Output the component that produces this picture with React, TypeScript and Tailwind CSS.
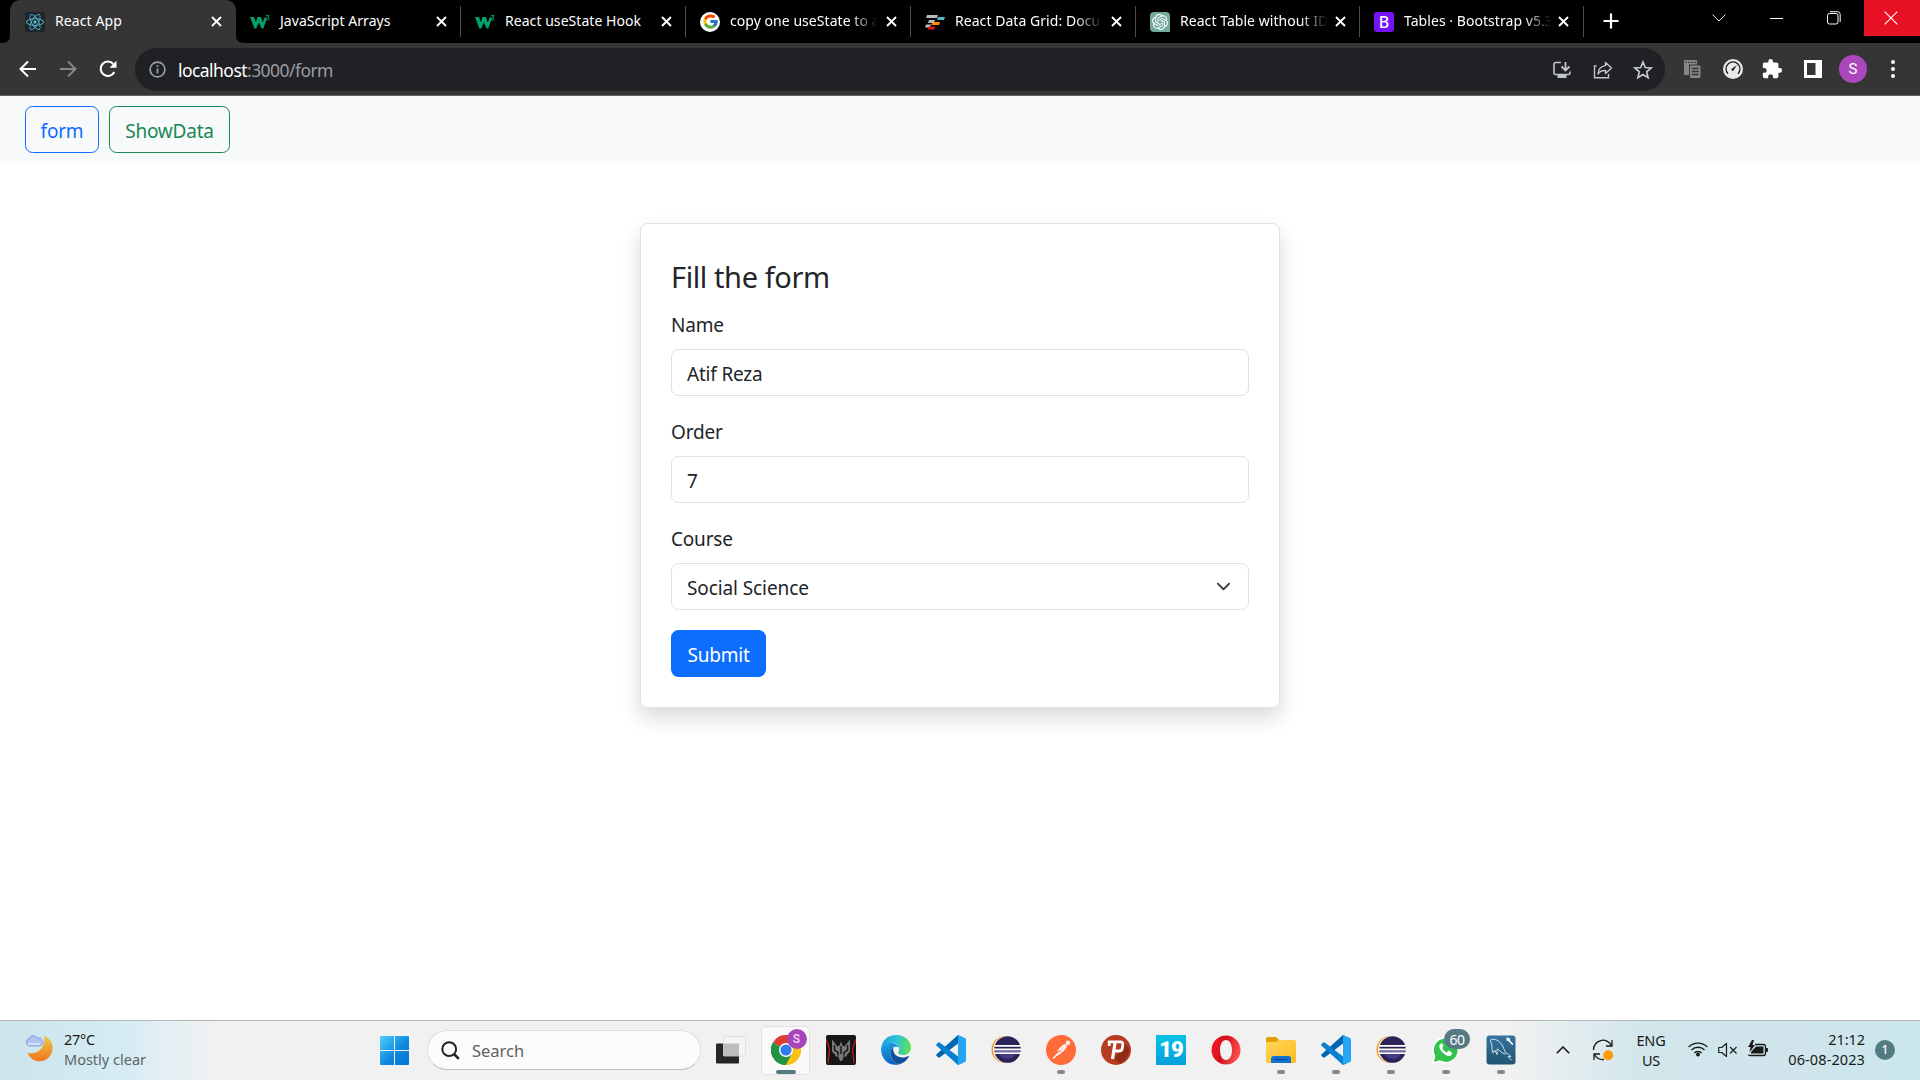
import type { ReactNode } from "react";
import { SiOpenai, SiPostman, SiReact } from "react-icons/si";
import { FcGoogle } from "react-icons/fc";
import { MdExtension } from "react-icons/md";

const font = "font-['Noto_Sans','Open_Sans',sans-serif]";

/* ---------- favicons ---------- */

const ReactIcon = () => (
  <div className="flex size-5 items-center justify-center rounded-[2px] bg-[#20232a]">
    <SiReact className="size-[18px] text-[#53b9d3]" />
  </div>
);

const W3Icon = () => (
  <svg viewBox="0 0 20 20" className="size-5">
    <path d="M0 5h4l2 5.600L7.400 5h3.400l2 5.600L14.600 5.400h2.600L13.400 16.400h-1.800L8.900 10.600 6.200 16.400H4.400z" fill="#04a06c" />
    <path d="M16 3.600h3l-1.400 1.800q1.600.3 1.400 1.600-.3 1.400-2.600 1" fill="none" stroke="#04a06c" strokeWidth="1" />
  </svg>
);

const GoogleIcon = () => (
  <div className="flex size-5 items-center justify-center rounded-full bg-white">
    <FcGoogle className="size-[17px]" />
  </div>
);

const GridIcon = () => (
  <svg viewBox="0 0 20 20" className="size-5">
    <path d="M2 3h11l-1 3H1z" fill="#b4bbbf" />
    <path d="M13 5h7l-1 3h-7z" fill="#55b4c8" />
    <path d="M4 8h6l-1 3H3z" fill="#b4bbbf" />
    <path d="M8 10h7l-1 3H6z" fill="#ff8c00" />
    <path d="M1 12.500h5l-1 3H0z" fill="#b4bbbf" />
    <path d="M4 14.500h6l-1 3H3z" fill="#f01010" />
  </svg>
);

const GptIcon = () => (
  <div className="flex size-5 items-center justify-center rounded-[4px] rounded-br-none bg-[#74aa9c]">
    <SiOpenai className="size-4 text-white" />
  </div>
);

const BootstrapIcon = () => (
  <div className="flex size-5 items-center justify-center rounded-[3px] bg-[#7414f5]">
    <span className="text-[16px] font-medium leading-none text-white">B</span>
  </div>
);

/* ---------- browser chrome ---------- */

const CloseX = () => (
  <svg viewBox="0 0 11 11" className="size-[11px] shrink-0">
    <path d="M1 1l9 9M10 1L1 10" stroke="#fff" strokeWidth="1.900" />
  </svg>
);

type TabData = { title: string; icon: ReactNode; fade?: boolean; width: string; gap: string };

const tabs: TabData[] = [
  { title: "JavaScript Arrays", icon: <W3Icon />, width: "w-[225px]", gap: "ml-[9px]" },
  { title: "React useState Hook", icon: <W3Icon />, width: "w-[225px]", gap: "ml-[9px]" },
  { title: "copy one useState to a", icon: <GoogleIcon />, fade: true, width: "w-[225px]", gap: "ml-[9px]" },
  { title: "React Data Grid: Docu", icon: <GridIcon />, fade: true, width: "w-[225px]", gap: "ml-[9px]" },
  { title: "React Table without ID", icon: <GptIcon />, fade: true, width: "w-[224px]", gap: "ml-[8px]" },
  { title: "Tables · Bootstrap v5.3", icon: <BootstrapIcon />, fade: true, width: "w-[224px]", gap: "ml-[7px]" },
];

const Tab = ({ title, icon, fade, width, gap }: TabData) => (
  <div className={`flex h-[31px] shrink-0 items-center border-r border-[#4a4d51] pl-[14px] ${width}`}>
    {icon}
    <span
      className={`ml-[10px] w-[147px] whitespace-nowrap pb-[2px] text-[14px] leading-5 tracking-[0.050px] text-white ${
        fade ? "[mask-image:linear-gradient(to_right,black_120px,transparent_148px)]" : ""
      }`}
    >
      {title}
    </span>
    <span className={`flex ${gap}`}>
      <CloseX />
    </span>
  </div>
);

const TabStrip = () => (
  <div className="flex h-[43px] bg-black pl-[2px]">
    <svg viewBox="0 0 8 43" className="h-[43px] w-2 shrink-0">
      <path d="M0 43q8 0 8-8v8z" fill="#353535" />
    </svg>
    <div className="flex h-[43px] w-[226px] shrink-0 items-center rounded-t-[10px] bg-[#353535] pl-[15px]">
      <ReactIcon />
      <span className="ml-[10px] w-[156px] pb-[2px] text-[14px] leading-5 tracking-[0.100px] text-white">React App</span>
      <CloseX />
    </div>
    <svg viewBox="0 0 8 43" className="-mr-2 h-[43px] w-2 shrink-0">
      <path d="M8 43q-8 0-8-8v8z" fill="#353535" />
    </svg>
    <div className="flex pt-1.5">
      {tabs.map((t) => (
        <Tab key={t.title} {...t} />
      ))}
    </div>
    <svg viewBox="0 0 16 16" className="ml-[19px] mt-[13px] size-4 shrink-0">
      <path d="M8 0.500v15M0.500 8h15" stroke="#fff" strokeWidth="2.200" />
    </svg>
    <div className="ml-auto flex h-9">
      <div className="flex w-[57px] items-center justify-center pr-[3px]">
        <svg viewBox="0 0 14 8" className="h-2 w-[14px]">
          <path d="M.5.5L7 7 13.500.5" fill="none" stroke="#ddd" strokeWidth="1" />
        </svg>
      </div>
      <div className="flex w-[57px] items-center justify-center pr-[3px]">
        <div className="h-px w-[13px] bg-white" />
      </div>
      <div className="flex w-[58px] items-center justify-center pr-[3px]">
        <svg viewBox="0 0 14 14" className="size-[14px]">
          <rect x=".5" y="2.500" width="10.500" height="10.500" rx="2" fill="none" stroke="#fff" />
          <path d="M3 .7h7.500q2.700 0 2.700 2.700V11" fill="none" stroke="#fff" />
        </svg>
      </div>
      <div className="flex w-14 items-center justify-center bg-[#e81123] pr-[2px]">
        <svg viewBox="0 0 14 14" className="size-[14px]">
          <path d="M.7.7l12.600 12.600M13.300.7L.7 13.300" stroke="#fff" strokeWidth="1.100" />
        </svg>
      </div>
    </div>
  </div>
);

const Toolbar = () => (
  <div className="flex h-[53px] items-center border-b border-[#606164] bg-[#353535] pb-px">
    <svg viewBox="0 0 18 18" className="ml-[19px] size-[18px] shrink-0">
      <path d="M17 9H2M9 1.500L1.500 9 9 16.500" fill="none" stroke="#fff" strokeWidth="2" />
    </svg>
    <svg viewBox="0 0 18 18" className="ml-[22px] size-[18px] shrink-0">
      <path d="M1 9h15M9 1.500L16.500 9 9 16.500" fill="none" stroke="#85868a" strokeWidth="2" />
    </svg>
    <svg viewBox="0 0 18 18" className="ml-[22px] size-[18px] shrink-0">
      <path d="M15.300 12A7.200 7.200 0 1 1 14.300 4" fill="none" stroke="#fff" strokeWidth="2.100" />
      <path d="M17.500 .8v7h-7z" fill="#fff" />
    </svg>
    <div className="ml-[18px] mt-px flex h-[43px] w-[1530px] shrink-0 items-center rounded-full bg-[#202124] pl-[14px]">
      <svg viewBox="0 0 17 17" className="size-[17px] shrink-0">
        <circle cx="8.500" cy="8.500" r="7.400" fill="none" stroke="#9aa0a6" strokeWidth="1.700" />
        <path d="M8.500 7.500v5M8.500 4.300v1.800" stroke="#9aa0a6" strokeWidth="1.800" />
      </svg>
      <span className="ml-3 pt-px text-[17.500px] leading-6 tracking-[-0.550px] text-[#9a9da1]">
        <span className="text-white">localhost</span>:3000/form
      </span>
      <svg viewBox="0 0 18 18" className="ml-auto mt-px size-[18px] shrink-0">
        <path d="M8 1.500H2.500q-1.500 0-1.500 1.500v9q0 1.500 1.500 1.500h13q1.500 0 1.500-1.500v-1.500" fill="none" stroke="#c4c7c9" strokeWidth="1.600" />
        <path d="M4.500 14h9v3h-9z" fill="#c4c7c9" />
        <path d="M12.500 1v8M8.500 5.500l4 4 4-4" fill="none" stroke="#c4c7c9" strokeWidth="1.800" />
      </svg>
      <svg viewBox="0 0 20 18" className="ml-[22px] mt-px h-[18px] w-5 shrink-0">
        <path d="M3.500 5H1.500v11.700h14V13" fill="none" stroke="#c4c7c9" strokeWidth="1.400" />
        <path d="M12.500 1.500L18.500 7l-6 5.500V9.500Q7.500 9.200 5 13 5.500 5.500 12.500 4.600z" fill="none" stroke="#c4c7c9" strokeWidth="1.400" strokeLinejoin="round" />
      </svg>
      <svg viewBox="0 0 20 20" className="ml-5 mr-3 mt-[2px] size-5 shrink-0">
        <path d="M10 2l2.300 5.500 5.900.5-4.500 3.900 1.400 5.800L10 14.600l-5.100 3.100 1.400-5.800L1.800 8l5.900-.5z" fill="none" stroke="#c4c7c9" strokeWidth="1.700" />
      </svg>
    </div>
    <svg viewBox="0 0 18 20" className="ml-[18px] h-5 w-[18px] shrink-0">
      <path d="M1 2q0-1 1-1h11q1 0 1 1v3.500H6V16H2q-1 0-1-1z" fill="#85868a" />
      <path d="M2 3.300h11" stroke="#353535" strokeWidth="1" strokeDasharray="2 1" />
      <rect x="7" y="6.500" width="10.500" height="12.500" rx="1" fill="#85868a" />
      <path d="M8.700 9.500h7M8.700 12.500h7M8.700 15.500h7" stroke="#353535" strokeWidth="1.300" />
    </svg>
    <svg viewBox="0 0 20 20" className="ml-[22px] size-5 shrink-0">
      <circle cx="10" cy="10" r="10" fill="#e9eae8" />
      <path d="M5 14.800a7 7 0 1 1 10 0" fill="none" stroke="#222" strokeWidth="1.300" />
      <path d="M14 6l-3.200 5a1.200 1.200 0 1 1-1.600-1.400z" fill="#222" />
    </svg>
    <MdExtension className="ml-[18px] size-[22px] shrink-0 text-white" />
    <svg viewBox="0 0 18 18" className="ml-[21px] size-[18px] shrink-0">
      <path d="M0 0h18v18H0zM3 3v12h8.500V3z" fill="#fff" fillRule="evenodd" />
    </svg>
    <div className="ml-[17px] flex size-7 shrink-0 items-center justify-center rounded-full bg-[#ab47bc] pt-[2px] font-['Roboto'] text-[15px] text-white">
      S
    </div>
    <div className="ml-[24px] flex flex-col gap-[3px]">
      <div className="size-1 rounded-full bg-white" />
      <div className="size-1 rounded-full bg-white" />
      <div className="size-1 rounded-full bg-white" />
    </div>
  </div>
);

/* ---------- page ---------- */

const Page = () => (
  <main className="flex-1 bg-white text-[19px] leading-[30px] tracking-[-0.200px] text-[#212529]">
    <nav className="flex h-[67px] items-center gap-[10px] bg-[#f8f9fb] pl-[25px]">
      <button className="h-[47px] w-[74px] rounded-[7.500px] border border-[#0d6efd] pt-[3px] text-[#0d6efd]">form</button>
      <button className="h-[47px] w-[121px] rounded-[7.500px] border border-[#198754] pt-[3px] text-[#198754]">ShowData</button>
    </nav>
    <section className="mx-auto mt-[60px] h-[485px] w-[640px] rounded-[7.500px] border border-[#dfe0e1] bg-white px-[30px] pt-[35px] shadow-[0_10px_20px_rgba(0,0,0,0.15)]">
      <h4 className="mb-[15px] text-[29px] leading-9 tracking-[-0.400px]">Fill the form</h4>
      <label className="mb-[9px] block">Name</label>
      <div className="mb-[21px] h-[47px] rounded-[7.500px] border border-[#dee2e6] px-[15px] pt-[9px]">Atif Reza</div>
      <label className="mb-[9px] block">Order</label>
      <div className="mb-[21px] h-[47px] rounded-[7.500px] border border-[#dee2e6] px-[15px] pt-[9px]">7</div>
      <label className="mb-[9px] block">Course</label>
      <div className="mb-5 flex h-[47px] items-center justify-between rounded-[7.500px] border border-[#dee2e6] px-[15px]">
        <span className="pt-[3px] tracking-[-0.100px]">Social Science</span>
        <svg viewBox="0 0 16 16" className="mr-[2px] size-[15px]">
          <path d="m2 5 6 6 6-6" fill="none" stroke="#343a40" strokeWidth="2" strokeLinecap="round" strokeLinejoin="round" />
        </svg>
      </div>
      <button className="h-[47px] w-[95px] rounded-[7.500px] bg-[#0d6efd] pt-[3px] text-white">Submit</button>
    </section>
  </main>
);

/* ---------- taskbar icons ---------- */

const ChromeIcon = () => (
  <svg viewBox="0 0 30 30" className="size-[30px]">
    <path d="M15 15L2 7.500A15 15 0 0 1 28 7.500z" fill="#e33b2e" />
    <path d="M15 15L28 7.500A15 15 0 0 1 15 30z" fill="#fbc116" />
    <path d="M15 15v15A15 15 0 0 1 2 7.500z" fill="#229342" />
    <path d="M8.900 18.500l6.100 3.500 6.100-3.500L15 30A15 15 0 0 1 2 7.500z" fill="#229342" />
    <path d="M15 8h13.300A15 15 0 0 1 15 30l6.100-11.500z" fill="#fbc116" />
    <circle cx="15" cy="15" r="7" fill="#fff" />
    <circle cx="15" cy="15" r="5.600" fill="#2f7bf0" />
  </svg>
);

const PredatorIcon = () => (
  <svg viewBox="0 0 30 30" className="size-[30px]">
    <rect width="30" height="30" rx="2" fill="#151617" />
    <path d="M0 4l3.500 10L2 28M30 4l-3.500 10L28 28" fill="none" stroke="#d21a20" strokeWidth="1.200" />
    <path d="M6 4.500l5.500 7 2 -1 1.500-4 1.500 4 2 1L24 4.500v12l-2.500 2.500-1.500 3-2 -1-2 5h-2l-2-5-2 1-1.500-3L6 16.500z" fill="#77797b" />
    <path d="M8.500 10v5l3.500 2.500v3M21.500 10v5L18 17.500v3M15 11v8" fill="none" stroke="#18191a" strokeWidth="1.500" />
  </svg>
);

const EdgeIcon = () => (
  <svg viewBox="0 0 30 30" className="size-[30px]">
    <defs>
      <linearGradient id="edgeTop" x1="0" y1="0.400" x2="1" y2="0.500">
        <stop offset="0" stopColor="#1b9de2" />
        <stop offset="0.500" stopColor="#2cc4d8" />
        <stop offset="1" stopColor="#62e04f" />
      </linearGradient>
      <linearGradient id="edgeLeft" x1="0" y1="0" x2="0.500" y2="1">
        <stop offset="0" stopColor="#1fa7ea" />
        <stop offset="1" stopColor="#0a62bd" />
      </linearGradient>
    </defs>
    <path d="M0 14C1 5 7 0 15 0c9 0 15 6 15 12.500 0 5-4 7.500-8 7.500-3 0-5-1-5-2.200 0-1 1.300-1.500 1.300-4C18.300 10 14 8 10 8 5 8 1 10.500 0 14z" fill="url(#edgeTop)" />
    <path d="M0 14c1-4 5-6 9.500-6 5 0 8.500 2.500 8.800 5.500-.8-1.300-2-1.900-3.300-1.900-3 0-5.500 3.400-5.500 7.400 0 5 4 9 9 10.200C9 32 0 25 0 14z" fill="url(#edgeLeft)" />
    <path d="M12.300 12.500C7 16 9 27 18.500 29.200c4-1 7.500-4 9.200-7.200.4-.9-.3-1.200-1-.8-6 3.300-15.700.3-14.400-8.700z" fill="#104f9c" />
  </svg>
);

const CodeIcon = () => (
  <svg viewBox="0 0 30 30" className="size-[30px]">
    <path d="M22 0v8.500L4 22.300Q3 23 2 22.300L.4 20.800Q-.2 20 .6 19.200z" fill="#0066b0" />
    <path d="M22 30v-8.500L4 7.700Q3 7 2 7.700L.4 9.200Q-.2 10 .6 10.800z" fill="#087fcf" />
    <path d="M21 .6Q22 -.3 23 .2l6 2.800q1 .5 1 1.600v20.800q0 1.100-1 1.600l-6 2.800q-1 .5-2-.4 1 .2 1-1V1.600q0-1.200-1-1z" fill="#25a5f3" />
  </svg>
);

const EclipseIcon = () => (
  <svg viewBox="0 0 30 30" className="size-[30px]">
    <circle cx="14" cy="14.500" r="13.500" fill="#f7941e" />
    <circle cx="15.500" cy="14.500" r="13.500" fill="#fff" />
    <circle cx="16.500" cy="14.500" r="13.300" fill="#2c2255" />
    <path d="M8 19h17q-3 5-8.500 5T8 19z" fill="#453a84" />
    <path d="M3 10.800h27M3 14.500h27M3 18.200h27" stroke="#fff" strokeWidth="1.800" />
    <path d="M4 16.400h25" stroke="#7a6fa8" strokeWidth="1.600" />
  </svg>
);

const PostmanIcon = () => (
  <div className="size-[30px] rounded-full bg-white">
    <SiPostman className="size-[30px] text-[#ff6c37]" />
  </div>
);

const PrIcon = () => (
  <svg viewBox="0 0 30 30" className="size-[30px]">
    <circle cx="15" cy="15" r="15" fill="#b63b20" />
    <path d="M14 24l9-16 5 5q1 10-9 15.500z" fill="#8f2b17" />
    <path d="M8.200 11V6.800h11q3 0 2.600 3.200l-.4 3q-.4 3-3.400 3h-4" fill="none" stroke="#fff" strokeWidth="2.800" />
    <path d="M14 8L11.500 24" stroke="#fff" strokeWidth="3.200" />
  </svg>
);

const NineteenIcon = () => (
  <div className="flex size-[30px] items-center justify-center bg-linear-to-b from-[#04c4e6] to-[#079fdc]">
    <span className="font-['Roboto'] text-[22px] font-black leading-none tracking-[-1px] text-white">19</span>
  </div>
);

const OperaIcon = () => (
  <svg viewBox="0 0 30 30" className="size-[30px]">
    <defs>
      <linearGradient id="opera" x1="0" y1="0" x2="1" y2="0.300">
        <stop offset="0" stopColor="#ff1b2d" />
        <stop offset="0.500" stopColor="#d0101f" />
        <stop offset="1" stopColor="#fb4c4c" />
      </linearGradient>
    </defs>
    <path d="M15 .5a14.500 14.500 0 1 0 0 29 14.500 14.500 0 0 0 0-29zM15 5c3.500 0 6 4 6 10s-2.500 10-6 10-6-4-6-10 2.500-10 6-10z" fill="url(#opera)" fillRule="evenodd" />
  </svg>
);

const FolderIcon = () => (
  <svg viewBox="0 0 30 30" className="size-[30px]">
    <defs>
      <linearGradient id="folder" x1="0" y1="0" x2="1" y2="1">
        <stop offset="0" stopColor="#ffd75e" />
        <stop offset="1" stopColor="#fcba1e" />
      </linearGradient>
    </defs>
    <path d="M0 4q0-2 2-2h8l3 3v4H0z" fill="#dfa000" />
    <path d="M0 7h10l3-2h15q2 0 2 2v19.500q0 1.500-1.500 1.500h-27Q0 28 0 26.500z" fill="url(#folder)" />
    <path d="M5 28v-4.500Q5 21 7.500 21h15q2.500 0 2.500 2.500V28z" fill="#0f74d1" />
    <path d="M9 24.500h12" stroke="#0a4a94" strokeWidth="1.300" strokeLinecap="round" />
  </svg>
);

const WhatsIcon = () => (
  <svg viewBox="0 0 30 30" className="size-[30px]">
    <path d="M14.500 1.500a13.500 13.500 0 0 0-12 19.500L.5 29.500l8.500-2A13.500 13.500 0 1 0 14.500 1.500z" fill="#fff" />
    <path d="M14.500 3.500A11.700 11.700 0 0 0 4.300 21L3 26.800l6-1.500A11.700 11.700 0 1 0 14.500 3.500z" fill="#35c14f" />
    <path d="M10 8.500c-3 2-1.500 6 1.500 9s7 5 9.200 2l.3-2-3.500-2-1.700 1.900c-2-.6-4-2.500-4.800-4.600l1.500-1.600-1.300-3z" fill="#fff" />
  </svg>
);

const MysqlIcon = () => (
  <svg viewBox="0 0 30 30" className="size-[30px]">
    <defs>
      <linearGradient id="mysql" x1="0" y1="0" x2="0" y2="1">
        <stop offset="0" stopColor="#35749f" />
        <stop offset="1" stopColor="#215472" />
      </linearGradient>
    </defs>
    <rect x=".5" y=".5" width="29" height="29" rx="3" fill="url(#mysql)" />
    <path d="M5 4.500c4-1 8 1 10.500 4.500 2 3 2.500 6.500 4.500 9 1.500 1 3.500 1.500 5 3.500l-3 .2 3.500 3.500M5 4.500c-1.500 2 .8 3.500 1 6 0 2.500-.4 5 1.200 7.500l1.500-3 2.300 4.500c.8-2-1-4.500.5-5.500 2.500 1 3.500 4.500 8 5" fill="none" stroke="#d4e3ed" strokeWidth="1" />
    <path d="M20.500 2.500l3 .5 1 3L27.500 9l-1.500 1-3-3.500-2.500-1z" fill="#fff" />
  </svg>
);

type App = { name: string; icon: ReactNode; running?: boolean };

const apps: App[] = [
  { name: "predator", icon: <PredatorIcon /> },
  { name: "edge", icon: <EdgeIcon /> },
  { name: "code", icon: <CodeIcon /> },
  { name: "eclipse", icon: <EclipseIcon /> },
  { name: "postman", icon: <PostmanIcon />, running: true },
  { name: "pr", icon: <PrIcon /> },
  { name: "nineteen", icon: <NineteenIcon /> },
  { name: "opera", icon: <OperaIcon /> },
  { name: "folder", icon: <FolderIcon />, running: true },
  { name: "code-2", icon: <CodeIcon />, running: true },
  { name: "eclipse-2", icon: <EclipseIcon />, running: true },
  {
    name: "whatsapp",
    icon: (
      <div className="relative">
        <WhatsIcon />
        <span className="absolute -top-[6px] left-[13px] flex h-5 w-[26px] items-center justify-center rounded-full bg-[#547b82] text-[14px] tracking-[-0.500px] text-white">
          60
        </span>
      </div>
    ),
    running: true,
  },
  { name: "mysql", icon: <MysqlIcon />, running: true },
];

const Taskbar = () => (
  <footer className="flex h-[60px] shrink-0 border-t border-[#b4b6b7] bg-[linear-gradient(to_right,#cbe5ec_0,#d6ecf2_130px,#e0eff4_155px,#f1f1f1_215px,#f1f1f1_1510px,#d2e7ec_1640px,#cfe5eb_1800px,#cbe7ec_1920px)]">
    <svg viewBox="0 0 28 28" className="ml-[25px] mt-[13px] size-7 shrink-0">
      <defs>
        <linearGradient id="moon" x1="0" y1="0" x2="0" y2="1">
          <stop offset="0" stopColor="#ecc94e" />
          <stop offset="1" stopColor="#f0761b" />
        </linearGradient>
      </defs>
      <path d="M19 2c9 3 11 13 6 20-6 8-18 7-22.500-3C14 21 21 12 19 2z" fill="url(#moon)" />
      <path d="M4 12a3.800 3.800 0 0 1 0-7.300A4.600 4.600 0 0 1 12.500 4.200 4 4 0 0 1 15 12z" fill="#b3c1f2" stroke="#8299dc" strokeWidth=".9" />
      <path d="M3 10h12" stroke="#e3e8fc" strokeWidth="1.500" />
    </svg>
    <div className="ml-[11px] w-[316px] pt-2 text-[14.500px] leading-5 text-[#1a1a1a]">
      <div className="tracking-[-0.300px]">27°C</div>
      <div className="text-[#5a6367]">Mostly clear</div>
    </div>
    <svg viewBox="0 0 29 29" className="mt-[15px] size-[29px] shrink-0">
      <defs>
        <linearGradient id="win" x1="0" y1="0" x2="1" y2="1">
          <stop offset="0" stopColor="#4fd0fc" />
          <stop offset="0.550" stopColor="#0f8ae0" />
          <stop offset="1" stopColor="#0273d4" />
        </linearGradient>
      </defs>
      <path d="M1 0h13v14H0V1q0-1 1-1zM15 0h13q1 0 1 1v13H15zM0 15h14v14H1q-1 0-1-1zM15 15h14v13q0 1-1 1H15z" fill="url(#win)" />
    </svg>
    <div className="ml-[18px] mt-[9px] flex h-10 w-[274px] shrink-0 items-center rounded-full border border-[#dfdfdf] border-b-[#c0c0c0] bg-[#fcfcfc] pl-[13px]">
      <svg viewBox="0 0 19 19" className="size-[19px]">
        <circle cx="8.200" cy="8.200" r="6.900" fill="none" stroke="#222" strokeWidth="2" />
        <path d="M13 13l4.800 4.800" stroke="#222" strokeWidth="2.500" />
      </svg>
      <span className="ml-[12px] pt-[2px] text-[16.500px] text-[#606060]">Search</span>
    </div>
    <svg viewBox="0 0 30 30" className="ml-[15px] mt-[15px] size-[30px] shrink-0">
      <rect y="7.500" width="23" height="20" rx="1" fill="#262624" />
      <rect x="7.500" y="0.500" width="22" height="19.500" rx="1" fill="#f4f4f4" stroke="#dcdcdc" strokeWidth=".8" />
      <path d="M7.500 7.500H23V20H7.500z" fill="#bdbdbd" />
    </svg>
    <div className="ml-[15px] mt-[5px] flex h-[49px] w-[49px] shrink-0 flex-col items-center rounded-[5px] border border-[#e2e2e2] bg-[#fafafa] pt-[8px]">
      <div className="relative">
        <ChromeIcon />
        <span className="absolute -top-[6px] left-4 flex size-5 items-center justify-center rounded-full bg-[#a845bb] font-['Roboto'] text-[12px] font-medium text-[#f0d8f4]">
          S
        </span>
      </div>
      <div className="mt-[5px] h-1 w-5 shrink-0 rounded-full bg-[#547b82]" />
    </div>
    <div className="ml-4 flex shrink-0 gap-[25px]">
      {apps.map((a) => (
        <div key={a.name} className="flex w-[30px] flex-col items-center pt-[14px]">
          {a.icon}
          {a.running && <div className="mt-[5px] h-1 w-2 rounded-full bg-[#878787]" />}
        </div>
      ))}
    </div>
    <svg viewBox="0 0 14 8" className="ml-[40px] mt-[25px] h-2 w-[14px] shrink-0">
      <path d="M.8 7.200L7 1l6.200 6.200" fill="none" stroke="#1a1a1a" strokeWidth="1.600" />
    </svg>
    <svg viewBox="0 0 22 22" className="ml-[22px] mt-[18px] size-[22px] shrink-0">
      <path d="M1.500 11A9.500 9.500 0 0 1 19.500 6.500M20 1v6h-6M2 21v-6h6M2.500 15.500A9.500 9.500 0 0 0 12 20.500" fill="none" stroke="#1a1a1a" strokeWidth="1.300" />
      <circle cx="16.200" cy="16.200" r="5" fill="#ff9a0c" />
    </svg>
    <div className="ml-[20px] w-[34px] pt-[9px] text-center text-[14.500px] leading-5 tracking-[-0.200px] text-[#1a1a1a]">
      <div>ENG</div>
      <div>US</div>
    </div>
    <svg viewBox="0 0 20 16" className="ml-5 mt-5 h-4 w-5 shrink-0">
      <path d="M.7 6A13.200 13.200 0 0 1 19.300 6M3.500 9A9.200 9.200 0 0 1 16.500 9M6.300 12A5.300 5.300 0 0 1 13.700 12" fill="none" stroke="#1a1a1a" strokeWidth="1.400" />
      <circle cx="10" cy="13.500" r="2" fill="#1a1a1a" />
    </svg>
    <svg viewBox="0 0 20 16" className="ml-[10px] mt-[21px] h-4 w-5 shrink-0">
      <path d="M.7 5.500h3L8.500 1.500v13L3.700 10.500h-3z" fill="none" stroke="#1a1a1a" strokeWidth="1.200" strokeLinejoin="round" />
      <path d="M12 5l6.500 6.500M18.500 5L12 11.500" stroke="#1a1a1a" strokeWidth="1.200" />
    </svg>
    <svg viewBox="0 0 20 17" className="ml-[10px] mt-[19px] h-[17px] w-5 shrink-0">
      <path d="M7 4.500h8.500q2 0 2 2v7q0 2-2 2h-13q-2 0-2-1" fill="none" stroke="#1a1a1a" strokeWidth="1.300" />
      <path d="M8 6.500h7.500v7H3V12z" fill="#1a1a1a" />
      <path d="M18 8h1q1 0 1 1v2q0 1-1 1h-1zM4 0L0 7h2.500L1.500 12.500 7 5H4.500L6 0z" fill="#1a1a1a" />
    </svg>
    <div className="ml-auto pt-2 text-right text-[14.500px] leading-5 text-[#1a1a1a]">
      <div className="tracking-[-0.050px]">21:12</div>
      <div className="tracking-[0.100px]">06-08-2023</div>
    </div>
    <div className="ml-[10px] mr-[25px] mt-[19px] flex size-5 shrink-0 items-center justify-center rounded-full bg-[#547b82] text-[12px] font-medium text-white">
      1
    </div>
  </footer>
);

export default function App() {
  return (
    <div className={`flex h-[1080px] w-[1920px] flex-col overflow-hidden bg-white ${font}`}>
      <TabStrip />
      <Toolbar />
      <Page />
      <Taskbar />
    </div>
  );
}
